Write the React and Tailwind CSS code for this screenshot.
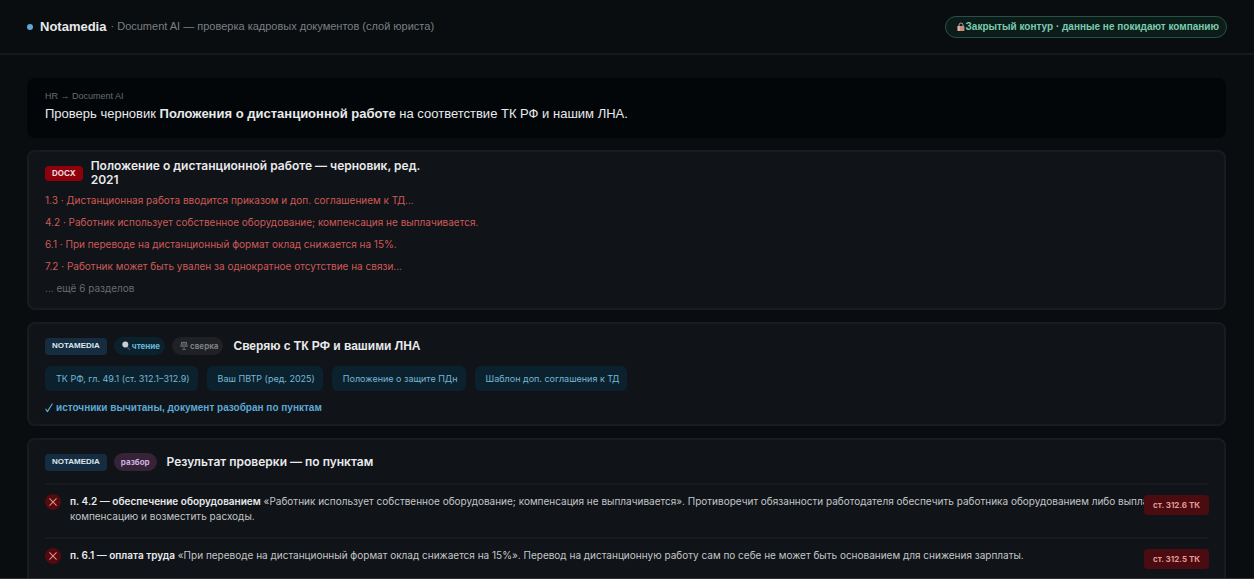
import React from "react"

const excerpts = [
    "1.3 · Дистанционная работа вводится приказом и доп. соглашением к ТД...",
    "4.2 · Работник использует собственное оборудование; компенсация не выплачивается.",
    "6.1 · При переводе на дистанционный формат оклад снижается на 15%.",
    "7.2 · Работник может быть увален за однократное отсутствие на связи..."
]

const sources = [
    "ТК РФ, гл. 49.1 (ст. 312.1–312.9)",
    "Ваш ПВТР (ред. 2025)",
    "Положение о защите ПДн",
    "Шаблон доп. соглашения к ТД"
]

const findings = [
    {
        title: "п. 4.2 — обеспечение оборудованием",
        text: "«Работник использует собственное оборудование; компенсация не выплачивается». Противоречит обязанности работодателя обеспечить работника оборудованием либо выплатить компенсацию и возместить расходы.",
        article: "ст. 312.6 ТК"
    },
    {
        title: "п. 6.1 — оплата труда",
        text: "«При переводе на дистанционный формат оклад снижается на 15%». Перевод на дистанционную работу сам по себе не может быть основанием для снижения зарплаты.",
        article: "ст. 312.5 ТК"
    }
]

function LockIcon() {
    return (
        <svg className="w-2 h-2.5 shrink-0" viewBox="0 0 8 10" aria-hidden="true">
            <path d="M2 5V3a2 2 0 0 1 4 0v2" fill="none" stroke="#a9a3a6" strokeWidth="1" />
            <rect x="0.6" y="4" width="6.8" height="5" rx="0.6" fill="#c98c7c" />
            <rect x="0.6" y="4" width="2.2" height="5" rx="0.6" fill="#e0b4ac" />
        </svg>
    )
}

function LensIcon() {
    return (
        <svg className="w-2.5 h-2.5 shrink-0" viewBox="0 0 10 10" aria-hidden="true">
            <path d="M6 6 8.5 8.2" stroke="#3f5560" strokeWidth="1.3" strokeLinecap="round" />
            <circle cx="4.3" cy="3.6" r="3" fill="#c9ced1" />
        </svg>
    )
}

function ScalesIcon() {
    return (
        <svg className="w-2 h-2.5 shrink-0" viewBox="0 0 8 10" fill="none" stroke="#85888b" strokeWidth="0.7" aria-hidden="true">
            <path d="M4 0.8V8.4M1 1.4H7M2.2 8.4H5.8" />
            <path d="M1.8 1.6 0.6 5.4H3L1.8 1.6M6.2 1.6 5 5.4H7.4L6.2 1.6" />
        </svg>
    )
}

function CheckIcon() {
    return (
        <svg className="w-2 h-2.5 shrink-0" viewBox="0 0 8 10" fill="none" stroke="#5ba9d6" strokeLinecap="round" strokeLinejoin="round" aria-hidden="true">
            <path d="M0.9 6.2 2.4 8.6 7.2 1" strokeWidth="1.2" />
        </svg>
    )
}

function CrossIcon() {
    return (
        <span className="w-4 h-4 rounded-full bg-[#520c0f] flex items-center justify-center shrink-0">
            <svg className="w-2 h-2" viewBox="0 0 7 7" stroke="#e88a86" strokeWidth="0.9" strokeLinecap="round" aria-hidden="true">
                <path d="M0.6 0.6 6.4 6.4M6.4 0.6 0.6 6.4" />
            </svg>
        </span>
    )
}

function BrandTag() {
    return (
        <span className="h-[17px] px-[7px] flex items-center rounded-sm bg-[#162c40] text-[8px] font-bold text-[#dce6ee]">
            NOTAMEDIA
        </span>
    )
}

function Card({ className = "", children }) {
    return (
        <section className={`rounded-lg border-2 border-[#181c1f] bg-[#101317] px-4 ${className}`}>
            {children}
        </section>
    )
}

function App() {
    return (
        <div className="h-screen overflow-hidden flex flex-col bg-[#090d10] border-b border-[#2b2f32] font-['Liberation_Sans',Arial,sans-serif] text-[#e8eaec]">
            <header className="h-[55px] shrink-0 border-b-2 border-[#15191c] px-[27px] flex items-center">
                <span className="w-1.5 h-1.5 rounded-full bg-[#5ba9d6]" />
                <h1 className="ml-[7px] text-[13px] font-bold">Notamedia</h1>
                <p className="ml-1 text-[11px] text-[#7b7f82]">· Document AI — проверка кадровых документов (слой юриста)</p>
                <div className="ml-auto h-[22px] pl-[11px] pr-[7px] flex items-center gap-px rounded-full border border-[#285048] bg-[#0c1c18] text-[10px] font-bold text-[#7acbb0]">
                    <LockIcon />
                    Закрытый контур · данные не покидают компанию
                </div>
            </header>

            <main className="flex-1 min-h-0 pl-[27px] pr-7 pt-[23px] flex flex-col gap-3">
                <section className="h-[60px] shrink-0 rounded-lg bg-[#030609] px-[18px] pt-3">
                    <p className="text-[9px] leading-3 text-[#686b6e]">HR → Document AI</p>
                    <p className="mt-0.5 text-[13px] leading-5">
                        Проверь черновик <b>Положения о дистанционной работе</b> на соответствие ТК РФ и нашим ЛНА.
                    </p>
                </section>

                <Card className="h-40 shrink-0 pt-[7px] font-[Inter,sans-serif]">
                    <div className="flex items-center gap-2">
                        <span className="h-[15px] px-[7px] flex items-center rounded-sm bg-[#8d000c] text-[8px] font-bold text-[#f3dcdc]">DOCX</span>
                        <h2 className="w-[340px] text-xs leading-[14px] font-semibold">Положение о дистанционной работе — черновик, ред. 2021</h2>
                    </div>
                    <ul className="mt-0.5 text-[10px] text-[#cd5a58]">
                        {excerpts.map((line) => (
                            <li key={line} className="h-[22px] flex items-center">{line}</li>
                        ))}
                        <li className="h-[22px] flex items-center text-[#686c6f]">... ещё 6 разделов</li>
                    </ul>
                </Card>

                <Card className="h-[104px] shrink-0 pt-[13px]">
                    <div className="flex items-center">
                        <BrandTag />
                        <span className="ml-[7px] h-[18px] pl-[7px] pr-[5px] flex items-center gap-px rounded-full bg-[#0b222c] font-[Inter,sans-serif] text-[8px] font-bold text-[#69b4da]">
                            <LensIcon />
                            чтение
                        </span>
                        <span className="ml-[7px] h-[18px] pl-2 pr-[5px] flex items-center gap-0.5 rounded-full bg-[#1f2124] font-[Inter,sans-serif] text-[8px] font-bold text-[#7c7f82]">
                            <ScalesIcon />
                            сверка
                        </span>
                        <h2 className="ml-[10px] text-xs font-bold leading-4">Сверяю с ТК РФ и вашими ЛНА</h2>
                    </div>
                    <ul className="mt-[11px] flex gap-[9px] font-[Inter,sans-serif] text-[9px] text-[#78b5d4]">
                        {sources.map((source) => (
                            <li key={source} className="h-[25px] pl-[11px] pr-2 flex items-center rounded-md bg-[#0b222e]">{source}</li>
                        ))}
                    </ul>
                    <p className="mt-[9px] flex items-center gap-[3px] text-[10px] leading-4 font-bold text-[#5ba9d6]">
                        <CheckIcon />
                        источники вычитаны, документ разобран по пунктам
                    </p>
                </Card>

                <Card className="flex-1 rounded-b-none border-b-0 pt-[13px]">
                    <div className="flex items-center">
                        <BrandTag />
                        <span className="ml-[7px] h-[18px] px-[7px] flex items-center rounded-full bg-[#362335] font-[Inter,sans-serif] text-[8px] font-bold text-[#cbb0e0]">разбор</span>
                        <h2 className="ml-[10px] text-xs leading-4 font-semibold font-[Inter,sans-serif]">Результат проверки — по пунктам</h2>
                    </div>
                    <ul className="mt-3">
                        {findings.map((finding) => (
                            <li key={finding.article} className="relative border-t-2 border-[#171b1e] pt-[9px] pb-[13px] flex gap-[9px]">
                                <CrossIcon />
                                <p className="font-[Inter,sans-serif] text-[10px] leading-[15px] text-[#c3c6c8]">
                                    <b className="font-semibold text-[#e8eaec]">{finding.title}</b> {finding.text}
                                </p>
                                <span className="absolute top-2.5 -right-px h-5 px-[9px] flex items-center rounded-sm bg-[#4a0c10] font-[Inter,sans-serif] text-[8px] font-bold text-[#e59a96]">{finding.article}</span>
                            </li>
                        ))}
                    </ul>
                </Card>
            </main>
        </div>
    )
}

export default App
